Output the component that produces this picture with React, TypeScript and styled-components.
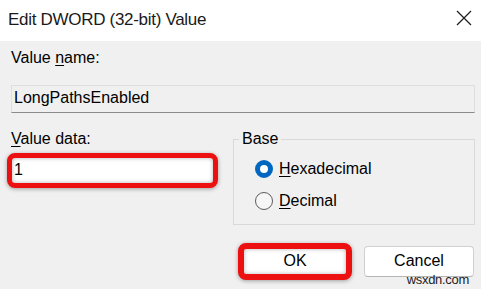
import React from "react";
import styled, { createGlobalStyle } from "styled-components";

const GlobalStyle = createGlobalStyle`
  html, body {
    margin: 0;
    padding: 0;
    background: #f0f0f0;
    overflow: hidden;
  }
  * {
    box-sizing: border-box;
  }
`;

const Dialog = styled.div`
  width: 481px;
  height: 289px;
  position: relative;
  display: flex;
  flex-direction: column;
  background: #f0f0f0;
  font-family: "Liberation Sans", Arial, sans-serif;
  font-size: 16px;
  color: #000;
  overflow: hidden;
`;

const TitleBar = styled.div`
  height: 41px;
  flex-shrink: 0;
  background: #fff;
  display: flex;
  align-items: center;
  justify-content: space-between;
  padding: 0 9px 0 8px;
`;

const Title = styled.span`
  font-size: 17px;
  letter-spacing: -0.3px;
  color: #1a1a1a;
  padding-bottom: 2px;
`;

const CloseButton = styled.span`
  display: flex;
  align-items: center;
  justify-content: center;
  width: 16px;
  height: 16px;
  margin-bottom: 6px;
`;

const Body = styled.div`
  display: flex;
  flex-direction: column;
  padding: 8px 6px 0 11px;
`;

const Label = styled.div`
  line-height: 18px;
  height: 18px;
  white-space: nowrap;

  u {
    text-decoration-thickness: 1px;
    text-underline-offset: 2px;
  }
`;

const NameField = styled.div`
  margin-top: 18px;
  height: 28px;
  display: flex;
  align-items: center;
  padding: 0 2px 2px;
  background: #f0f0f0;
  border: 1px solid #dedede;
  border-bottom-color: #8a8a8a;
  line-height: 18px;
`;

const DataRow = styled.div`
  margin-top: 17px;
  display: grid;
  grid-template-columns: 207px 1fr;
  column-gap: 15px;
  align-items: start;
`;

const Column = styled.div`
  display: flex;
  flex-direction: column;
`;

const Highlight = styled.div`
  margin: 5px 0 0 -4px;
  width: 211px;
  height: 35px;
  border: 5px solid #ec1010;
  border-radius: 8px;
  background: #fff;
  box-shadow: 0 1px 4px rgba(0, 0, 0, 0.35), inset 0 0 4px rgba(0, 0, 0, 0.3);
  display: flex;
  align-items: center;
  padding: 0 0 1px 2px;
  line-height: 18px;
`;

const GroupBox = styled.fieldset`
  margin: 0;
  padding: 5px 0 7px 5px;
  border: 1px solid #d9d9d9;
  min-width: 0;
`;

const Legend = styled.legend`
  padding: 0 3px;
  line-height: 18px;
`;

const RadioList = styled.div`
  margin-left: 16px;
  display: flex;
  flex-direction: column;
`;

const RadioRow = styled.div`
  height: 32px;
  display: flex;
  align-items: center;
  gap: 6px;
  line-height: 18px;

  u {
    text-decoration-thickness: 1px;
    text-underline-offset: 2px;
  }
`;

const RadioCircle = styled.span<{ $checked?: boolean }>`
  width: 18px;
  height: 18px;
  border-radius: 50%;
  flex-shrink: 0;
  background: ${(p) => (p.$checked ? "#fff" : "#f6f6f6")};
  border: ${(p) => (p.$checked ? "5px solid #0067c0" : "1px solid #5c5c5c")};
`;

const ButtonRow = styled.div`
  margin-top: 18px;
  display: flex;
  justify-content: flex-end;
  align-items: center;
  gap: 12px;
  padding-right: 1px;
`;

const Button = styled.div<{ $marked?: boolean }>`
  display: flex;
  align-items: center;
  justify-content: center;
  background: #fff;
  line-height: 18px;
  width: ${(p) => (p.$marked ? "114px" : "110px")};
  height: ${(p) => (p.$marked ? "37px" : "31px")};
  border: ${(p) => (p.$marked ? "6px solid #ec1010" : "1px solid #d0d0d0")};
  border-bottom-color: ${(p) => (p.$marked ? "#ec1010" : "#b5b5b5")};
  border-radius: ${(p) => (p.$marked ? "8px" : "4px")};
  box-shadow: ${(p) =>
    p.$marked
      ? "0 1px 4px rgba(0,0,0,0.35), inset 0 0 4px rgba(0,0,0,0.3)"
      : "none"};
  padding-bottom: 1px;
`;

const Watermark = styled.span`
  position: absolute;
  right: 12px;
  bottom: 2px;
  font-size: 13px;
  letter-spacing: -0.3px;
  line-height: 15px;
  color: #222;
`;

const CloseIcon = () => (
  <svg width="16" height="16" viewBox="0 0 16 16">
    <path d="M1 1 L15 15 M15 1 L1 15" stroke="#1a1a1a" strokeWidth="1.2" fill="none" />
  </svg>
);

export default function App() {
  return (
    <>
      <GlobalStyle />
      <Dialog>
        <TitleBar>
          <Title>Edit DWORD (32-bit) Value</Title>
          <CloseButton>
            <CloseIcon />
          </CloseButton>
        </TitleBar>
        <Body>
          <Label>
            Value <u>n</u>ame:
          </Label>
          <NameField>LongPathsEnabled</NameField>
          <DataRow>
            <Column>
              <Label>
                <u>V</u>alue data:
              </Label>
              <Highlight>1</Highlight>
            </Column>
            <GroupBox>
              <Legend>Base</Legend>
              <RadioList>
                <RadioRow>
                  <RadioCircle $checked />
                  <span>
                    <u>H</u>exadecimal
                  </span>
                </RadioRow>
                <RadioRow>
                  <RadioCircle />
                  <span>
                    <u>D</u>ecimal
                  </span>
                </RadioRow>
              </RadioList>
            </GroupBox>
          </DataRow>
          <ButtonRow>
            <Button $marked>OK</Button>
            <Button>Cancel</Button>
          </ButtonRow>
        </Body>
        <Watermark>wsxdn.com</Watermark>
      </Dialog>
    </>
  );
}
